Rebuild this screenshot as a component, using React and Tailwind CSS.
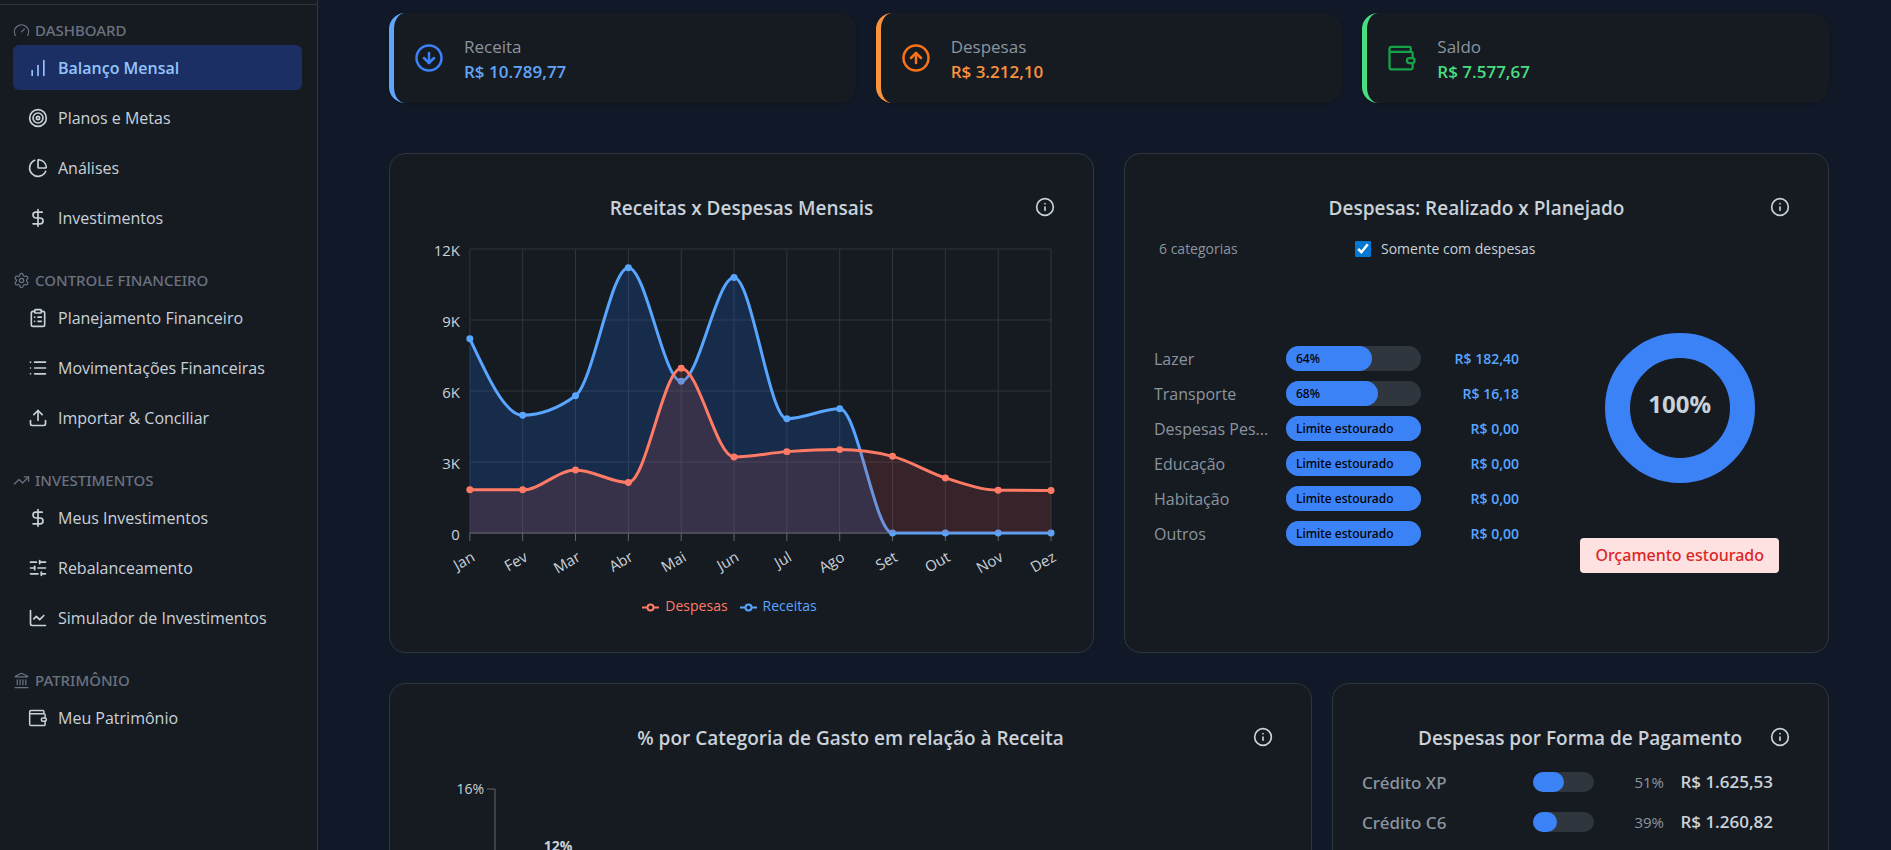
import {
  ChartLine,
  ChartNoAxesColumnIncreasing,
  ChartPie,
  ClipboardList,
  CircleArrowDown,
  CircleArrowUp,
  DollarSign,
  Gauge,
  Info,
  Landmark,
  List,
  Settings,
  SlidersHorizontal,
  Target,
  TrendingUp,
  Upload,
} from "lucide-react";

function WalletIcon({ className }) {
  return (
    <svg viewBox="0 0 24 24" className={className} fill="none" stroke="currentColor" strokeWidth="1.8" strokeLinejoin="round" strokeLinecap="round" aria-hidden="true">
      <path d="M19 7V4a1 1 0 0 0-1-1H3.500A1.500 1.500 0 0 0 2 4.500v15A1.500 1.500 0 0 0 3.500 21h15.800a1.200 1.200 0 0 0 1.200-1.200V16M20.500 12V8.200A1.200 1.200 0 0 0 19.300 7H2" />
      <rect x="16" y="12" width="6" height="4" rx="1.800" />
    </svg>
  );
}

const GROUPS = [
  {
    title: "DASHBOARD",
    icon: Gauge,
    items: [
      { label: "Balanço Mensal", icon: ChartNoAxesColumnIncreasing, active: true },
      { label: "Planos e Metas", icon: Target },
      { label: "Análises", icon: ChartPie },
      { label: "Investimentos", icon: DollarSign },
    ],
  },
  {
    title: "CONTROLE FINANCEIRO",
    icon: Settings,
    items: [
      { label: "Planejamento Financeiro", icon: ClipboardList },
      { label: "Movimentações Financeiras", icon: List },
      { label: "Importar & Conciliar", icon: Upload },
    ],
  },
  {
    title: "INVESTIMENTOS",
    icon: TrendingUp,
    items: [
      { label: "Meus Investimentos", icon: DollarSign },
      { label: "Rebalanceamento", icon: SlidersHorizontal },
      { label: "Simulador de Investimentos", icon: ChartLine },
    ],
  },
  { title: "PATRIMÔNIO", icon: Landmark, items: [{ label: "Meu Patrimônio", icon: WalletIcon }] },
];

function Sidebar() {
  return (
    <aside className="w-[318px] shrink-0 border-r border-[#30363d] bg-[#161b22] pt-1">
      <nav className="flex flex-col gap-5 border-t border-[#30363d] pr-[15px] pl-[13px] pt-[10px]">
        {GROUPS.map((g) => (
          <section key={g.title}>
            <h2 className="flex h-[30px] items-center gap-[5px] font-['Noto_Sans','Open_Sans',sans-serif] text-[15px] font-medium text-[#6b7280]">
              <g.icon className="size-[17px]" strokeWidth={1.75} />
              {g.title}
            </h2>
            <ul className="flex flex-col gap-[5px] pb-[5px]">
              {g.items.map((it) => (
                <li key={it.label}>
                  <a
                    href="#"
                    className={
                      it.active
                        ? "flex h-[45px] items-center gap-[10px] rounded-md bg-[#1c2f64] px-[15px] pt-px text-base font-semibold text-[#93c5fd]"
                        : "flex h-[45px] items-center gap-[10px] rounded-md px-[15px] pt-px text-base text-[#c9d1d9]"
                    }
                  >
                    <it.icon className="size-5 shrink-0" />
                    {it.label}
                  </a>
                </li>
              ))}
            </ul>
          </section>
        ))}
      </nav>
    </aside>
  );
}

function Stat({ label, value, icon, className, valueClass }) {
  return (
    <div className={"flex h-[90px] items-center gap-5 rounded-2xl border-l-[5px] bg-[#161b22] px-5 shadow-sm " + className}>
      {icon}
      <div className="pt-px">
        <p className="text-[17px] leading-[25px] text-[#8b949e]">{label}</p>
        <p className={"text-[17px] leading-[25px] font-semibold " + valueClass}>{value}</p>
      </div>
    </div>
  );
}

function Card({ title, titleClass = "text-center", children }) {
  return (
    <section className="flex flex-col rounded-2xl border border-[#30363d] bg-[#161b22] px-[29px] pt-10">
      <header className="relative h-7">
        <h2 className={"text-[19px] leading-7 font-semibold text-[#c9d1d9] " + titleClass}>{title}</h2>
        <button type="button" aria-label={"Informações sobre " + title} className="absolute top-[3px] right-[9px] text-[#c9d1d9]">
          <Info className="size-5" />
        </button>
      </header>
      {children}
    </section>
  );
}

const MONTHS = ["Jan", "Fev", "Mar", "Abr", "Mai", "Jun", "Jul", "Ago", "Set", "Out", "Nov", "Dez"];
const RECEITAS = [8210, 4980, 5800, 11210, 6415, 10790, 4830, 5250, 0, 0, 0, 0];
const DESPESAS = [1825, 1825, 2665, 2135, 6960, 3212, 3440, 3525, 3240, 2330, 1810, 1798];

const LEFT = 51;
const TOP = 12;
const STEP = 53;
const HEIGHT = 285;
const BASE = TOP + HEIGHT;
const toPoint = (v, i) => [LEFT + i * STEP, BASE - (v / 12000) * HEIGHT];

/* Monotone cubic interpolation: the curve never overshoots its points. */
function monotone(points) {
  const n = points.length;
  const slopes = [];
  for (let i = 0; i < n - 1; i++) slopes.push((points[i + 1][1] - points[i][1]) / (points[i + 1][0] - points[i][0]));
  const tangents = points.map((_, i) => {
    if (i === 0 || i === n - 1) return null;
    const a = slopes[i - 1];
    const b = slopes[i];
    return (Math.sign(a) + Math.sign(b)) * Math.min(Math.abs(a), Math.abs(b), 0.5 * Math.abs((a + b) / 2)) || 0;
  });
  tangents[0] = (3 * slopes[0] - tangents[1]) / 2;
  tangents[n - 1] = (3 * slopes[n - 2] - tangents[n - 2]) / 2;
  let d = `M${points[0][0]},${points[0][1]}`;
  for (let i = 0; i < n - 1; i++) {
    const [x0, y0] = points[i];
    const [x1, y1] = points[i + 1];
    const t = (x1 - x0) / 3;
    d += `C${x0 + t},${y0 + t * tangents[i]},${x1 - t},${y1 - t * tangents[i + 1]},${x1},${y1}`;
  }
  return d;
}

function Series({ values, color }) {
  return <path d={monotone(values.map(toPoint))} fill="none" stroke={color} strokeWidth="3" />;
}

function Area({ values, color }) {
  return <path d={`${monotone(values.map(toPoint))}V${BASE}H${LEFT}Z`} fill={color} fillOpacity="0.2" />;
}

function Dots({ values, color }) {
  return values.map((v, i) => {
    const [x, y] = toPoint(v, i);
    return <circle key={i} cx={x} cy={y} r="3.500" fill={color} />;
  });
}

function LineChart() {
  return (
    <svg viewBox="0 0 647 350" className="mt-[15px] w-full" role="img" aria-label="Receitas e despesas por mês">
      <g stroke="#30363d">
        {[0, 1, 2, 3, 4].map((i) => (
          <line key={i} x1={LEFT} x2={LEFT + 11 * STEP} y1={TOP + (i * HEIGHT) / 4} y2={TOP + (i * HEIGHT) / 4} />
        ))}
        {MONTHS.map((m, i) => (
          <line key={m} x1={LEFT + i * STEP} x2={LEFT + i * STEP} y1={TOP} y2={BASE} />
        ))}
      </g>
      <line x1={LEFT} x2={LEFT + 11 * STEP} y1={BASE} y2={BASE} stroke="#666" />
      {MONTHS.map((m, i) => (
        <line key={m} x1={LEFT + i * STEP} x2={LEFT + i * STEP} y1={BASE} y2={BASE + 8} stroke="#666" />
      ))}
      <Area values={RECEITAS} color="#1f6feb" />
      <Series values={RECEITAS} color="#58a6ff" />
      <Dots values={RECEITAS} color="#58a6ff" />
      <Area values={DESPESAS} color="#c04d4a" />
      <Series values={DESPESAS} color="#ff7b66" />
      <Dots values={DESPESAS} color="#ff7b66" />
      <g className="fill-[#c9d1d9] text-[15px]">
        {["12K", "9K", "6K", "3K", "0"].map((t, i) => (
          <text key={t} x={LEFT - 10} y={TOP + (i * HEIGHT) / 4 + 7} textAnchor="end">
            {t}
          </text>
        ))}
        {MONTHS.map((m, i) => (
          <text key={m} transform={`translate(${LEFT + i * STEP + 6} ${BASE + 27}) rotate(-30)`} textAnchor="end">
            {m}
          </text>
        ))}
      </g>
    </svg>
  );
}

function LegendItem({ label, className }) {
  return (
    <li className={"flex items-center gap-[6px] " + className}>
      <svg viewBox="0 0 17 17" className="mt-1 size-[17px]" fill="none" stroke="currentColor" strokeWidth="2" aria-hidden="true">
        <path d="M0 8.500h5.500M11.500 8.500H17" />
        <circle cx="8.500" cy="8.500" r="3" />
      </svg>
      {label}
    </li>
  );
}

const CATEGORIES = [
  { name: "Lazer", pct: 64, value: "R$ 182,40" },
  { name: "Transporte", pct: 68, value: "R$ 16,18" },
  { name: "Despesas Pes...", pct: 100, value: "R$ 0,00" },
  { name: "Educação", pct: 100, value: "R$ 0,00" },
  { name: "Habitação", pct: 100, value: "R$ 0,00" },
  { name: "Outros", pct: 100, value: "R$ 0,00" },
];

const PAYMENTS = [
  { name: "Crédito XP", pct: 51, value: "R$ 1.625,53" },
  { name: "Crédito C6", pct: 39, value: "R$ 1.260,82" },
];

export default function App() {
  return (
    <div className="flex h-screen overflow-hidden bg-[#111827] font-['Open_Sans','Noto_Sans',sans-serif]">
      <Sidebar />
      <main className="flex min-w-0 flex-1 flex-col overflow-hidden pt-[13px] pr-[62px] pl-[71px]">
        <div className="grid shrink-0 grid-cols-3 gap-5">
          <Stat label="Receita" value="R$ 10.789,77" className="border-[#60a5fa]" valueClass="text-[#60a5fa]" icon={<CircleArrowDown className="size-[30px] text-[#3b82f6]" />} />
          <Stat label="Despesas" value="R$ 3.212,10" className="border-[#fb923c]" valueClass="text-[#fb923c]" icon={<CircleArrowUp className="size-[30px] text-[#f97316]" />} />
          <Stat label="Saldo" value="R$ 7.577,67" className="border-[#4ade80]" valueClass="text-[#4ade80]" icon={<WalletIcon className="size-[30px] text-[#16a34a]" />} />
        </div>

        <div className="mt-[50px] grid min-h-[500px] shrink-0 grid-cols-2 gap-[30px]">
          <Card title="Receitas x Despesas Mensais">
            <LineChart />
            <ul className="mt-2 flex justify-center gap-3 pr-6 text-sm leading-6">
              <LegendItem label="Despesas" className="text-[#ff7b66]" />
              <LegendItem label="Receitas" className="text-[#58a6ff]" />
            </ul>
          </Card>

          <Card title="Despesas: Realizado x Planejado">
            <div className="mt-[15px] grid h-6 grid-cols-[196px_1fr] items-center pl-[5px] text-sm">
              <span className="text-[#8b949e]">6 categorias</span>
              <label className="flex items-center gap-[10px] text-[#c9d1d9]">
                <input type="checkbox" defaultChecked className="size-4 accent-[#0078d4]" />
                Somente com despesas
              </label>
            </div>
            <div className="mt-[72px] flex justify-between">
              <ul className="mt-[13px] flex w-[365px] flex-col gap-[10px]">
                {CATEGORIES.map((c) => (
                  <li key={c.name} className="flex h-[25px] items-center">
                    <span className="w-[122px] pt-px text-base leading-6 whitespace-nowrap text-[#8b949e]">{c.name}</span>
                    <div className="ml-[10px] h-[25px] w-[135px] rounded-full bg-[#30363d]">
                      <div className="flex h-full items-center rounded-full bg-[#3b82f6] pl-[10px] font-['Noto_Sans','Open_Sans',sans-serif] text-xs font-medium text-black" style={{ width: c.pct + "%" }}>
                        {c.pct < 100 ? c.pct + "%" : "Limite estourado"}
                      </div>
                    </div>
                    <span className="flex-1 text-right text-sm font-semibold text-[#58a6ff]">{c.value}</span>
                  </li>
                ))}
              </ul>
              <div className="mr-5 flex flex-col items-center">
                <div className="flex size-[150px] items-center justify-center rounded-full border-[25px] border-[#3b82f6] pb-2 text-2xl font-bold text-[#c9d1d9]">
                  100%
                </div>
                <p className="mt-[55px] rounded bg-[#fee2e2] px-[15px] font-['Noto_Sans','Open_Sans',sans-serif] text-base leading-[35px] font-medium text-[#dc2626]">Orçamento estourado</p>
              </div>
            </div>
          </Card>
        </div>

        <div className="mt-[30px] grid shrink-0 grid-cols-[65fr_35fr] gap-5">
          <Card title="% por Categoria de Gasto em relação à Receita">
            <svg viewBox="0 0 863 340" className="mt-[22px] w-full" role="img" aria-label="Percentual da receita por categoria">
              <path d="M68 15H76V330H840" fill="none" stroke="#666" />
              <rect x="115" y="86" width="46" height="244" fill="#3b82f6" />
              <g className="fill-[#c9d1d9] text-sm">
                <text x="65" y="20" textAnchor="end">16%</text>
                <text x="139" y="77" textAnchor="middle" className="font-bold">12%</text>
              </g>
            </svg>
          </Card>

          <Card title="Despesas por Forma de Pagamento" titleClass="pl-14">
            <ul className="mt-[10px]">
              {PAYMENTS.map((p) => (
                <li key={p.name} className="flex h-10 items-center pr-[26px]">
                  <span className="flex-1 pt-px font-['Noto_Sans','Open_Sans',sans-serif] text-[17px] font-medium text-[#8b949e]">{p.name}</span>
                  <div className="h-5 w-[61px] rounded-full bg-[#30363d]">
                    <div className="h-full rounded-full bg-[#3b82f6]" style={{ width: p.pct + "%" }} />
                  </div>
                  <span className="w-[70px] text-right text-[15px] text-[#8b949e]">{p.pct}%</span>
                  <span className="w-[109px] text-right text-[17px] font-semibold text-[#c9d1d9]">{p.value}</span>
                </li>
              ))}
            </ul>
          </Card>
        </div>
      </main>
    </div>
  );
}
